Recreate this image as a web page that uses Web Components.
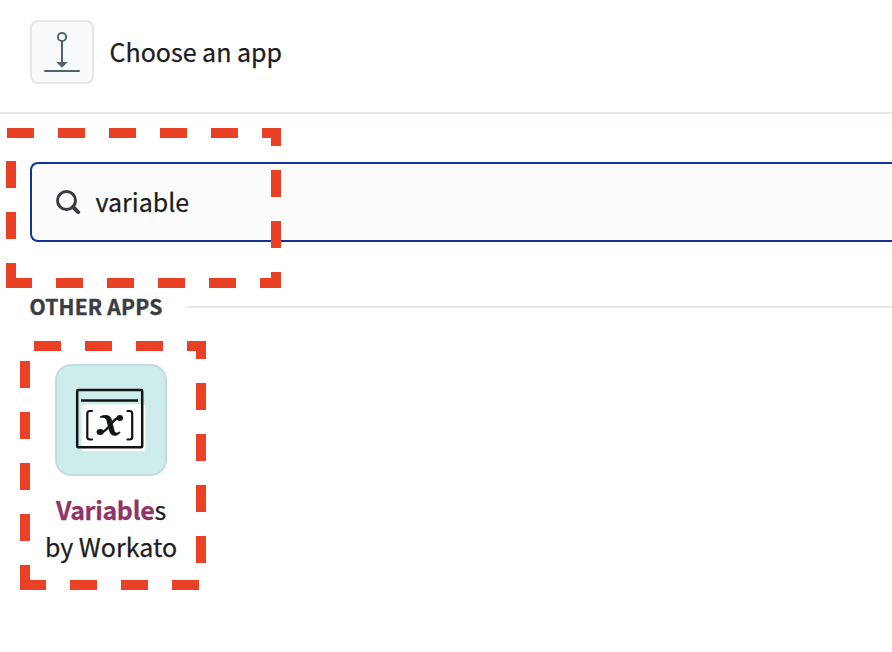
<!DOCTYPE html>
<html lang="en">
<head>
<meta charset="utf-8">
<title>Choose an app</title>
<style>
html,body{margin:0;background:#fff;overflow:hidden}
body{width:892px;height:652px;font-family:"Noto Sans CJK SC","Noto Sans",sans-serif;color:#1c1d20;-webkit-text-stroke:.25px}
</style>
</head>
<body>
<app-picker></app-picker>
<script>
const define = (name, html) => customElements.define(name, class extends HTMLElement {
  constructor() {
    super();
    const t = document.createElement('template');
    t.innerHTML = html;
    this.attachShadow({ mode: 'open' }).append(t.content.cloneNode(true));
  }
});

define('step-header', `
<style>
:host{display:flex;align-items:center;gap:15.5px;box-sizing:border-box;height:114px;padding:0 30px 8px;border-bottom:2px solid #e3e8eb}
.icon{box-sizing:border-box;width:64px;height:64px;border:2px solid #e3e7ea;border-radius:8px;background:#f9fafc}
svg{display:block}
.title{font-size:25px;line-height:36px;padding-bottom:2px;white-space:nowrap}
</style>
<div class="icon"><svg width="60" height="60" viewBox="32 22 60 60" fill="none" stroke="#4e6272" stroke-width="2">
<circle cx="62" cy="37" r="4.1"/><path d="M62 41V63"/><path d="M45 71H79" stroke-linecap="round"/><path d="M56.2 62H67.8L62 67.7Z" fill="#4e6272" stroke="none"/></svg></div>
<div class="title"><slot></slot></div>`);

define('search-field', `
<style>
:host{display:flex;align-items:center;gap:14.5px;box-sizing:border-box;height:80px;margin:48px 0 0 30px;padding-left:23px;border:2px solid #14339a;border-right:0;border-radius:8px 0 0 8px;background:#fcfcfc}
svg{display:block}
.value{font-size:25px;line-height:36px;padding-bottom:2px}
</style>
<svg width="26" height="26" viewBox="55 189 26 26" fill="none" stroke="#3a3c43"><circle cx="66.5" cy="200.5" r="9" stroke-width="3"/><path d="M73 207L78.2 212.1" stroke-width="4" stroke-linecap="round"/></svg>
<div class="value"><slot></slot></div>`);

define('section-title', `
<style>
:host{display:flex;align-items:center;gap:24px;height:36px;margin:47px 0 0 30px}
.text{margin-left:-.5px;font-size:21px;font-weight:700;letter-spacing:.22px;line-height:34px;padding-bottom:2px;color:#3a3c43;white-space:nowrap;-webkit-text-stroke:.4px}
.line{flex:1;height:2px;background:#e3e8eb}
</style>
<div class="text"><slot></slot></div><div class="line"></div>`);

define('app-card', `
<style>
:host{display:flex;flex-direction:column;align-items:center;width:162px;margin:39px 0 0 30px}
.tile{box-sizing:border-box;width:112px;height:112px;border:2px solid #c1dddf;border-radius:16px;background:#ceecec}
svg{display:block}
.name{margin-top:15px;font-size:25px;line-height:37px;text-align:center;white-space:nowrap}
</style>
<div class="tile"><svg width="108" height="108" viewBox="57 366 108 108" fill="none" stroke="#101414">
<rect x="81.5" y="404.5" width="64" height="46.5" rx="2" fill="#fff" stroke="none"/>
<rect x="77.2" y="390" width="65" height="57.3" rx="1" stroke-width="2.5"/>
<path d="M81 400.5H138" stroke-width="2.7"/>
<path d="M92 411H90Q87.3 411 87.3 413.5V437Q87.3 439.5 90 439.5H92M127.500 411H129.500Q132.200 411 132.200 413.500V437Q132.200 439.500 129.500 439.500H127.500" stroke-width="2.2" stroke-linecap="round"/>
<path d="M100.200 416.600Q104 414.800 107.500 415.500C111 416.500 111.500 419.500 112.200 423L114 430C114.800 433 116.500 434 119.500 431.800L120.200 432.500C118 435 116 435.800 113.500 435.300C110 434.500 109.500 431 108.500 427L106.800 420.500C106 417.500 104 417 100.700 417.600Z" fill="#101414" stroke-width=".7"/>
<path d="M121 417.500C115 417 112 423 109.500 426S103 433.500 99 432.500" stroke-width="2.4"/>
<ellipse cx="119.800" cy="418" rx="3.200" ry="2.900" fill="#101414" stroke="none"/><ellipse cx="100.200" cy="432" rx="3.600" ry="2.900" fill="#101414" stroke="none"/>
</svg></div>
<div class="name"><slot></slot></div>`);

define('dashed-highlights', `
<style>:host{position:absolute;left:0;top:0;pointer-events:none}svg{display:block}</style>
<svg width="892" height="652" fill="none" stroke="#ea4126" stroke-width="10" stroke-dasharray="27 24">
<path d="M7 133H276V283H6"/><path d="M11 161V288"/>
<path d="M34 346H201V585H20"/><path d="M25 361V590"/>
</svg>`);

define('app-picker', `
<style>
:host{display:block;position:relative;width:892px;height:652px;overflow:hidden;background:#fff}
b{font-weight:700;color:#8f3566;letter-spacing:-.33px}
</style>
<step-header>Choose an app</step-header>
<search-field>variable</search-field>
<section-title>OTHER APPS</section-title>
<app-card><b>Variable</b>s<br>by Workato</app-card>
<dashed-highlights></dashed-highlights>`);
</script>
</body>
</html>
